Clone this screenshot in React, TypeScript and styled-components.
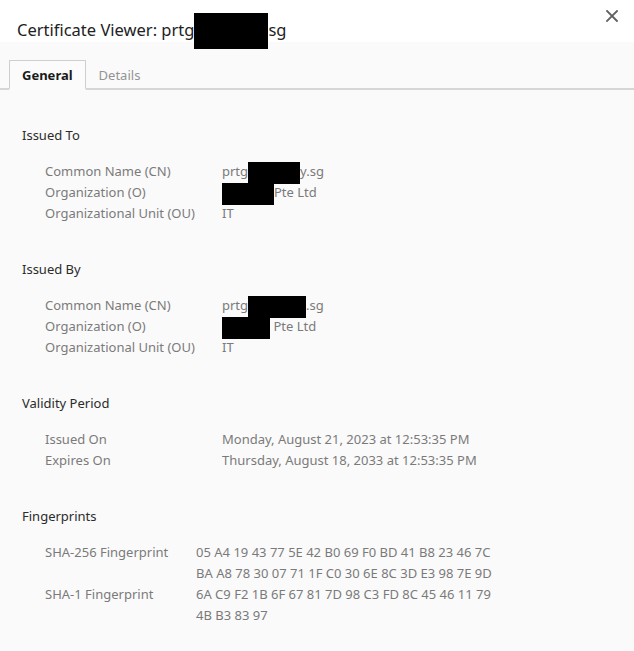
import React from 'react';
import styled, { createGlobalStyle } from 'styled-components';

const GlobalStyle = createGlobalStyle`
  body {
    margin: 0;
    background: #fafafa;
    font-family: 'Noto Sans', 'Open Sans', sans-serif;
  }
`;

interface Row {
  label: string;
  value: React.ReactNode;
}

interface Section {
  title: string;
  rows: Row[];
  valueCol?: number;
}

const Redact: React.FC<{ w: number; h?: number }> = ({ w, h = 22 }) => (
  <RedactBox style={{ width: w, height: h }} />
);

const sections: Section[] = [
  {
    title: 'Issued To',
    rows: [
      {
        label: 'Common Name (CN)',
        value: (
          <>
            prtg<Redact w={52} />y.sg
          </>
        ),
      },
      {
        label: 'Organization (O)',
        value: (
          <>
            <Redact w={52} />Pte Ltd
          </>
        ),
      },
      { label: 'Organizational Unit (OU)', value: 'IT' },
    ],
  },
  {
    title: 'Issued By',
    rows: [
      {
        label: 'Common Name (CN)',
        value: (
          <>
            prtg<Redact w={58} />.sg
          </>
        ),
      },
      {
        label: 'Organization (O)',
        value: (
          <>
            <Redact w={48} />&nbsp;Pte Ltd
          </>
        ),
      },
      { label: 'Organizational Unit (OU)', value: 'IT' },
    ],
  },
  {
    title: 'Validity Period',
    rows: [
      { label: 'Issued On', value: 'Monday, August 21, 2023 at 12:53:35 PM' },
      { label: 'Expires On', value: 'Thursday, August 18, 2033 at 12:53:35 PM' },
    ],
  },
  {
    title: 'Fingerprints',
    valueCol: 151,
    rows: [
      {
        label: 'SHA-256 Fingerprint',
        value: (
          <>
            05 A4 19 43 77 5E 42 B0 69 F0 BD 41 B8 23 46 7C
            <br />
            BA A8 78 30 07 71 1F C0 30 6E 8C 3D E3 98 7E 9D
          </>
        ),
      },
      {
        label: 'SHA-1 Fingerprint',
        value: (
          <>
            6A C9 F2 1B 6F 67 81 7D 98 C3 FD 8C 45 46 11 79
            <br />
            4B B3 83 97
          </>
        ),
      },
    ],
  },
];

const CloseIcon = () => (
  <svg width="12" height="12" viewBox="0 0 12 12">
    <path d="M1 1 L11 11 M11 1 L1 11" stroke="#5f5f5f" strokeWidth="1.8" strokeLinecap="square" />
  </svg>
);

const App: React.FC = () => {
  return (
    <>
      <GlobalStyle />
      <Dialog>
        <Header>
          <Title>
            Certificate Viewer: prtg<TitleRedact />sg
          </Title>
          <CloseButton>
            <CloseIcon />
          </CloseButton>
        </Header>
        <TabBar>
          <Tab active>General</Tab>
          <Tab>Details</Tab>
        </TabBar>
        <Body>
          {sections.map((s) => (
            <SectionBlock key={s.title}>
              <SectionTitle>{s.title}</SectionTitle>
              <Fields valueCol={s.valueCol ?? 177}>
                {s.rows.map((r) => (
                  <React.Fragment key={r.label}>
                    <Label>{r.label}</Label>
                    <Value>{r.value}</Value>
                  </React.Fragment>
                ))}
              </Fields>
            </SectionBlock>
          ))}
        </Body>
      </Dialog>
    </>
  );
};

const Dialog = styled.div`
  width: 634px;
  min-height: 651px;
  background: #fafafa;
`;

const Header = styled.div`
  height: 42px;
  background: #ffffff;
  display: flex;
  align-items: flex-start;
  justify-content: space-between;
  padding: 0 16px 0 17px;
  box-sizing: border-box;
`;

const Title = styled.h1`
  margin: 0;
  padding-top: 18px;
  font-size: 16.5px;
  font-weight: 400;
  line-height: 24px;
  color: #222;
  white-space: nowrap;
`;

const TitleRedact = styled.span`
  display: inline-block;
  width: 74px;
  height: 36px;
  background: #000;
  vertical-align: middle;
  margin: -14px 0 -12px;
`;

const CloseButton = styled.div`
  padding-top: 10px;
  line-height: 0;
  cursor: pointer;
`;

const TabBar = styled.div`
  display: flex;
  align-items: flex-end;
  height: 48px;
  padding: 0 0 0 9px;
  border-bottom: 2px solid #d6d6d6;
  box-sizing: border-box;
  background: #fafafa;
`;

const Tab = styled.div<{ active?: boolean }>`
  height: 30px;
  margin-bottom: -2px;
  padding: 0 12px;
  font-size: 13px;
  line-height: 29px;
  box-sizing: border-box;
  font-weight: ${(p) => (p.active ? 700 : 400)};
  color: ${(p) => (p.active ? '#1a1a1a' : '#939393')};
  background: ${(p) => (p.active ? '#fbfbfb' : 'transparent')};
  border: 1px solid ${(p) => (p.active ? '#cfcfcf' : 'transparent')};
  border-bottom: 2px solid ${(p) => (p.active ? '#fbfbfb' : 'transparent')};
`;

const Body = styled.div`
  padding: 35px 0 0 22px;
  display: flex;
  flex-direction: column;
  gap: 35px;
`;

const SectionBlock = styled.section`
  display: flex;
  flex-direction: column;
  gap: 15px;
`;

const SectionTitle = styled.h2`
  margin: 0;
  font-size: 13px;
  font-weight: 400;
  line-height: 21px;
  color: #2b2b2b;
`;

const Fields = styled.div<{ valueCol: number }>`
  display: grid;
  grid-template-columns: ${(p) => p.valueCol}px 1fr;
  padding-left: 23px;
  font-size: 13px;
  line-height: 21px;
  color: #7a7a7a;
`;

const Label = styled.div`
  white-space: nowrap;
`;

const Value = styled.div`
  white-space: nowrap;
`;

const RedactBox = styled.span`
  display: inline-block;
  background: #000;
  vertical-align: middle;
  margin: -2px 0;
`;

export default App;
